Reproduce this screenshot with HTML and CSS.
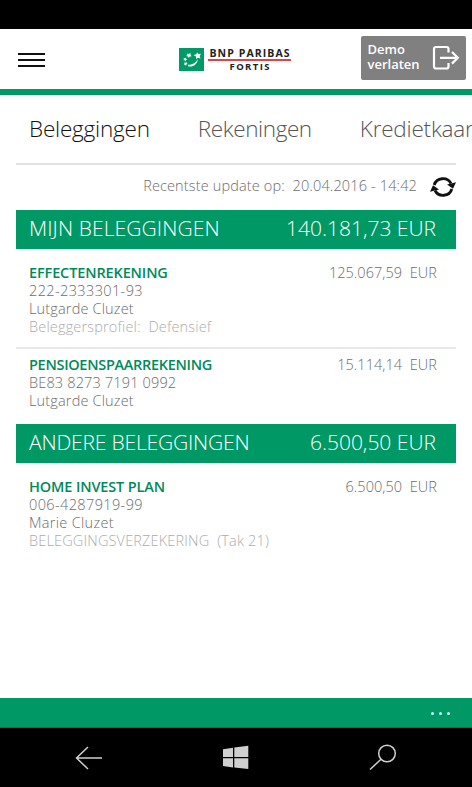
FILE: index.html
```html
<!DOCTYPE html>
<html lang="nl">
<head>
<meta charset="utf-8">
<title>Beleggingen</title>
<link rel="stylesheet" href="styles.css">
</head>
<body>
<div class="phone">
  <div class="statusbar"></div>
  <header class="topbar">
    <div class="menu"><i></i><i></i><i></i></div>
    <div class="logo">
      <svg width="25" height="23" viewBox="0 0 25 23">
        <rect width="25" height="23" fill="#009a66"/>
        <g fill="#fff">
          <path d="M14.500 7l2.500-.6 1.200-2 1.200 1.700 2.600-.3-1.300 2.300.8 2.300-2.500-.6-2 1.300v-2.600z"/>
          <path d="M8 5.500l2 .5 1.600-1-.1 2 1.300 1.300-2.100.2-.9 1.600-.8-1.700-1.900-.4 1.300-1z"/>
          <path d="M4.500 10l1.500.3 1-.9.200 1.400 1 .8-1.300.5-.4 1.300-.8-1.100-1.400-.1.800-1z"/>
          <path d="M5 14.500l1.500.3 1-.9.200 1.400 1 .8-1.300.5-.4 1.300-.8-1.100-1.400-.1.800-1z"/>
          <path d="M9 18.300c5 1.200 9-1.500 10-7.300-2 3.500-5 6-10 5.800z"/>
        </g>
      </svg>
      <div class="brand"><span class="bnp">BNP PARIBAS</span><span class="rule"></span><span class="fortis">FORTIS</span></div>
    </div>
    <div class="demo">
      <span>Demo<br>verlaten</span>
      <svg width="28" height="26" viewBox="0 0 28 26" fill="none" stroke="#fff" stroke-width="2.200">
        <path d="M16.500 7.500V4q0-2-2-2H4Q2 2 2 4v17.500q0 2 2 2h10.500q2 0 2-2V18M8 12.800h17.500M20 7l5.800 5.800L20 18.600"/>
      </svg>
    </div>
  </header>
  <nav class="tabs"><span class="tab active">Beleggingen</span><span class="tab rek">Rekeningen</span><span class="tab">Kredietkaarten</span></nav>
  <main class="content">
    <div class="update">
      <span>Recentste update op:&nbsp; 20.04.2016 - 14:42</span>
      <svg width="26" height="22" viewBox="0 0 26 22">
        <path d="M4.200 9A9 8.500 0 0 1 21 7.500M21.800 13A9 8.500 0 0 1 5 14.500" fill="none" stroke="#111" stroke-width="2.800"/>
        <path d="M17 8.500l9-2.200-3 6.500zM9 13.500L0 15.700l3-6.500z" fill="#111"/>
      </svg>
    </div>
    <section>
      <h2 class="bar"><span class="wide">MIJN BELEGGINGEN</span><span>140.181,73 EUR</span></h2>
      <article class="account first">
        <div><h3>EFFECTENREKENING</h3><p class="number">222-2333301-93</p><p>Lutgarde Cluzet</p><p class="note">Beleggersprofiel:&nbsp; Defensief</p></div>
        <span class="amount">125.067,59&nbsp; EUR</span>
      </article>
      <article class="account second">
        <div><h3>PENSIOENSPAARREKENING</h3><p>BE83 8273 7191 0992</p><p>Lutgarde Cluzet</p></div>
        <span class="amount">15.114,14&nbsp; EUR</span>
      </article>
    </section>
    <section>
      <h2 class="bar"><span class="tight">ANDERE BELEGGINGEN</span><span>6.500,50 EUR</span></h2>
      <article class="account first">
        <div><h3>HOME INVEST PLAN</h3><p class="number">006-4287919-99</p><p class="holder">Marie Cluzet</p><p class="note">BELEGGINGSVERZEKERING&nbsp; (Tak 21)</p></div>
        <span class="amount">6.500,50&nbsp; EUR</span>
      </article>
    </section>
  </main>
  <footer class="appbar"><i></i><i></i><i></i></footer>
  <div class="navbar">
    <svg width="28" height="26" viewBox="0 0 28 26" fill="none" stroke="#d0d0d0" stroke-width="1.500"><path d="M27 13H1.500M13 2L1.500 13 13 24"/></svg>
    <svg width="26" height="26" viewBox="0 0 26 26" fill="#d0d0d0"><path d="M0 4.200l10-1.500v9.300H0zM11.300 2.500L25.300.8V12h-14zM0 13.200h10v9.300L0 21zM11.300 13.200h14V24l-14-1.500z"/></svg>
    <svg width="28" height="28" viewBox="0 0 28 28" fill="none" stroke="#d0d0d0" stroke-width="1.500"><circle cx="18" cy="9.500" r="8.300"/><path d="M12 15.300L1 25.500"/></svg>
  </div>
</div>
</body>
</html>
```
FILE: styles.css
```css
* { box-sizing: border-box; }
body { margin: 0; background: #fff; font-family: "Open Sans", "Noto Sans", sans-serif; font-weight: 300; font-stretch: 90%; }
.phone { width: 472px; height: 787px; display: flex; flex-direction: column; overflow: hidden; }
.statusbar { height: 29px; background: #000; flex: none; }
.topbar { height: 66px; flex: none; border-bottom: 6px solid #009966; display: flex; align-items: flex-start; padding-left: 18px; }
.menu { width: 27px; padding-top: 24px; display: grid; gap: 4px; }
.menu i { height: 2px; background: #111; }
.logo { display: flex; gap: 4px; margin: 19px 0 0 134px; }
.brand { display: flex; flex-direction: column; align-items: center; width: 83px; font-weight: 700; font-stretch: 100%; color: #222; white-space: nowrap; }
.bnp { font-size: 10.500px; line-height: 11px; letter-spacing: 1.1px; margin-right: -1.1px; }
.rule { width: 83px; height: 2px; flex: none; background: #d9474a; }
.fortis { font-size: 9.500px; line-height: 11px; letter-spacing: 1.4px; margin-right: -1.4px; }
.demo { margin: 7px 0 0 70px; width: 105px; height: 44px; flex: none; background: #808080; border-radius: 2px; display: flex; justify-content: space-between; padding: 6px 6px 0 6.500px; color: #fff; font-size: 13px; line-height: 15px; font-weight: 600; }
.demo svg { margin-top: 3px; }
.tabs { height: 68px; flex: none; display: flex; gap: 48px; padding: 18px 0 0 29px; font-size: 22.500px; line-height: 32px; letter-spacing: -.2px; white-space: nowrap; color: #555; }
.tab { flex: none; }
.active { color: #111; }
.rek { letter-spacing: -.4px; }
.content { flex: 1; margin: 0 16px; border-top: 2px solid #e2e2e2; }
.update { height: 45px; display: flex; justify-content: flex-end; align-items: flex-start; gap: 13px; padding-top: 11px; font-size: 14.500px; line-height: 20px; letter-spacing: .14px; color: #6c6c6c; white-space: nowrap; }
.bar { margin: 0; height: 39px; background: #009966; color: #fff; display: flex; justify-content: space-between; padding: 0 20px 0 13px; font-size: 21px; line-height: 37px; font-weight: 300; white-space: nowrap; }
.wide { letter-spacing: .1px; }
.tight { letter-spacing: -.17px; }
.account { display: flex; justify-content: space-between; padding: 0 19px 0 13px; font-size: 14.500px; line-height: 18px; color: #6c6c6c; white-space: nowrap; }
.account h3, .account p { margin: 0; font-size: inherit; letter-spacing: .16px; }
.account h3 { color: #008a5a; font-weight: 600; letter-spacing: -.13px; }
.account.second h3 { letter-spacing: -.3px; }
.account .number { letter-spacing: .38px; }
.account .holder { letter-spacing: .3px; }
.amount { letter-spacing: .05px; }
.first { padding-top: 15px; height: 98px; }
.second { padding-top: 7px; height: 77px; border-top: 2px solid #e8e8e8; }
.account .note { color: #acacac; }
.appbar { height: 30px; flex: none; background: #009966; border-bottom: 1px solid #007a50; display: flex; justify-content: flex-end; gap: 5px; padding: 14px 22px 0 0; }
.appbar i { width: 3px; height: 3px; border-radius: 50%; background: #cff; }
.navbar { height: 59px; flex: none; background: #000; display: flex; justify-content: space-between; align-items: center; padding: 0 75px; }
```
